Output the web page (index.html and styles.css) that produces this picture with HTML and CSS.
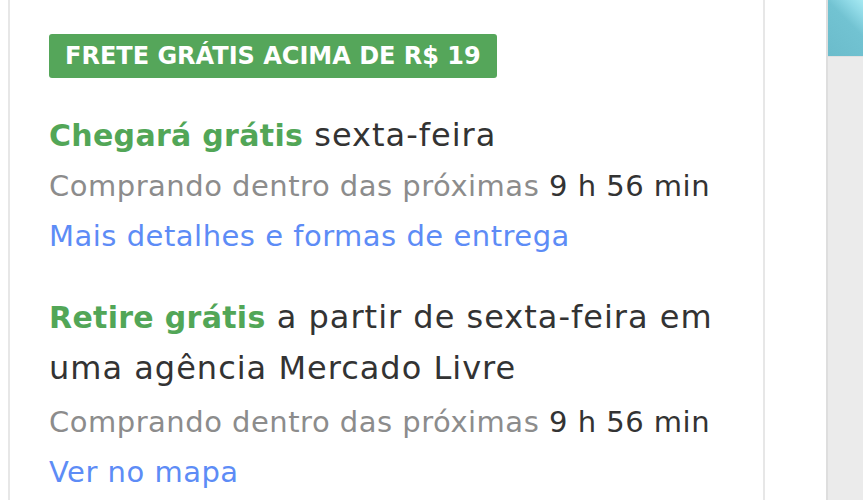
FILE: index.html
```html
<!DOCTYPE html>
<html lang="pt-BR">
<head>
<meta charset="utf-8">
<title>Frete</title>
<link rel="stylesheet" href="styles.css">
</head>
<body>
<div class="page">
  <section class="card">
    <div class="badge">FRETE GRÁTIS ACIMA DE R$ 19</div>
    <div class="block block-ship">
      <p class="title"><span class="green">Chegará grátis</span> sexta-feira</p>
      <p class="sub">Comprando dentro das próximas <span class="dark">9 h 56 min</span></p>
      <a class="link" href="#">Mais detalhes e formas de entrega</a>
    </div>
    <div class="block block-pick">
      <p class="title"><span class="green">Retire grátis</span> a partir de sexta-feira em uma agência Mercado Livre</p>
      <p class="sub">Comprando dentro das próximas <span class="dark">9 h 56 min</span></p>
      <a class="link" href="#">Ver no mapa</a>
    </div>
  </section>
  <aside class="side">
    <div class="thumb"></div>
  </aside>
</div>
</body>
</html>
```
FILE: styles.css
```css
html, body {
  margin: 0;
  padding: 0;
  background: #fff;
  height: 100%;
}
body {
  font-family: "DejaVu Sans", "Open Sans", sans-serif;
  color: #333;
  overflow: hidden;
}
.page {
  display: flex;
  height: 500px;
  padding-left: 8px;
}
.card {
  width: 757px;
  flex: none;
  border-left: 2px solid #e7e7e7;
  border-right: 2px solid #e7e7e7;
  padding: 34px 0 0 39px;
  box-sizing: border-box;
}
.badge {
  display: inline-block;
  background: #55a65a;
  color: #fff;
  font-weight: 700;
  font-size: 24px;
  line-height: 44px;
  height: 44px;
  padding: 0 16px;
  border-radius: 3px;
}
.block p {
  margin: 0;
}
.title {
  font-size: 32px;
  line-height: 51px;
  color: #333;
  width: 690px;
  letter-spacing: 1px;
}
.green {
  color: #52a657;
  font-weight: 700;
  font-size: 30px;
  letter-spacing: 0.3px;
}
.sub {
  font-size: 29px;
  line-height: 50px;
  color: #8c8c8c;
  letter-spacing: 0.5px;
}
.dark {
  color: #333;
}
.link {
  display: block;
  font-size: 29px;
  line-height: 50px;
  color: #5d8cf6;
  text-decoration: none;
  letter-spacing: 0.5px;
}
.block-ship {
  margin-top: 32px;
}
.block-pick {
  margin-top: 31px;
}
.block-pick .sub {
  margin-top: 3px;
}
.side {
  margin-left: 61px;
  flex: 1;
  background: #ebebeb;
  border-left: 2px solid #dedede;
}
.thumb {
  height: 56px;
  background: linear-gradient(225deg, #a6e9f2 0%, #8fd9e6 18%, #72c3d2 40%, #6bbccb 100%);
  border-bottom: 1px solid #e0e0e0;
}
```
